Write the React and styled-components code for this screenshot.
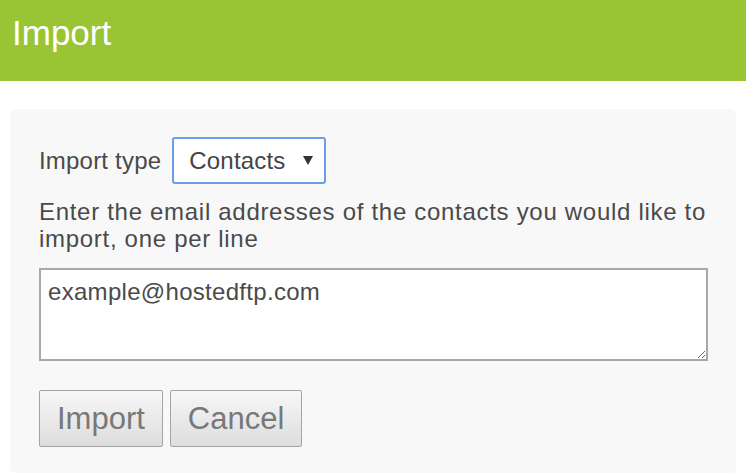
import React from "react";
import styled, { createGlobalStyle } from "styled-components";

const GlobalStyle = createGlobalStyle`
  body {
    margin: 0;
    background: #ffffff;
    font-family: "Liberation Sans", Arial, sans-serif;
    color: #4a4a4a;
  }
`;

const Header = styled.header`
  height: 81px;
  box-sizing: border-box;
  padding: 13px 0 0 12px;
  background-color: #99c434;
  color: #ffffff;
  font-size: 35px;
`;

const Panel = styled.section`
  margin: 28px 10px 0;
  padding: 28px 29px 27px;
  background-color: #f8f8f8;
  border-radius: 7px;
  font-size: 24px;
`;

const TypeRow = styled.div`
  display: flex;
  align-items: center;
  gap: 11px;
  height: 47px;
  letter-spacing: 0.2px;
`;

const SelectBox = styled.div`
  box-sizing: border-box;
  width: 154px;
  height: 47px;
  display: flex;
  align-items: center;
  justify-content: space-between;
  padding: 0 11px 0 15px;
  background: #ffffff;
  border: 2px solid #6c9de9;
  border-radius: 3px;
  color: #444444;
`;

const Hint = styled.p`
  margin: 14px 0 0;
  line-height: 27px;
  letter-spacing: 0.7px;
`;

const EmailArea = styled.textarea`
  display: block;
  box-sizing: border-box;
  width: 669px;
  height: 93px;
  margin-top: 16px;
  padding: 8px 7px;
  border: 2px solid #a8a8a8;
  background: #ffffff;
  font-family: "Liberation Sans", Arial, sans-serif;
  font-size: 24px;
  letter-spacing: 0.3px;
  color: #4a4a4a;
  outline: none;
`;

const Actions = styled.div`
  display: flex;
  gap: 7px;
  margin-top: 29px;
`;

const Button = styled.button`
  height: 57px;
  padding: 0 17px;
  border: 1px solid #a4a4a4;
  border-radius: 2px;
  background: linear-gradient(#f7f7f7, #dddddd);
  font-family: "Liberation Sans", Arial, sans-serif;
  font-size: 31px;
  color: #787878;
`;

const Arrow = () => (
  <svg width="10" height="9" viewBox="0 0 10 9">
    <path d="M0 0h10L5 9z" fill="#333" />
  </svg>
);

export default function App() {
  return (
    <>
      <GlobalStyle />
      <Header>Import</Header>
      <Panel>
        <TypeRow>
          <span>Import type</span>
          <SelectBox>
            <span>Contacts</span>
            <Arrow />
          </SelectBox>
        </TypeRow>
        <Hint>
          Enter the email addresses of the contacts you would like to import, one per line
        </Hint>
        <EmailArea defaultValue="example@hostedftp.com" />
        <Actions>
          <Button>Import</Button>
          <Button>Cancel</Button>
        </Actions>
      </Panel>
    </>
  );
}
